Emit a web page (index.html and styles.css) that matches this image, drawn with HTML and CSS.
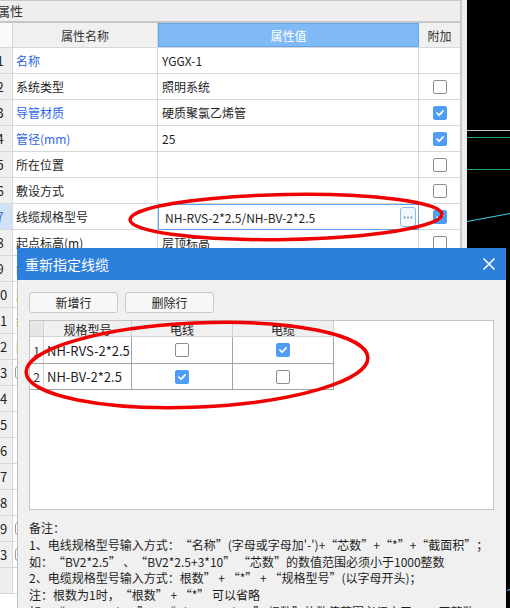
FILE: index.html
```html
<!DOCTYPE html>
<html lang="zh">
<head>
<meta charset="utf-8">
<title>属性</title>
<link rel="stylesheet" href="styles.css">
</head>
<body>
<div class="app">
  <div class="props">
    <div class="props-main">
      <div class="props-title">属性</div>
      <div class="phead">
        <div class="pnum"></div>
        <div class="pname hcell">属性名称</div>
        <div class="pval hval">属性值</div>
        <div class="patt hcell">附加</div>
      </div>
      <div class="prow"><div class="pnum">1</div><div class="pname blue">名称</div><div class="pval">YGGX-1</div><div class="patt"></div></div>
      <div class="prow"><div class="pnum">2</div><div class="pname">系统类型</div><div class="pval">照明系统</div><div class="patt"><span class="cb"></span></div></div>
      <div class="prow"><div class="pnum">3</div><div class="pname blue">导管材质</div><div class="pval">硬质聚氯乙烯管</div><div class="patt"><span class="cb on"><svg viewBox="0 0 14 14"><path d="M3.5 7.2 L6 9.6 L10.6 4.6"/></svg></span></div></div>
      <div class="prow"><div class="pnum">4</div><div class="pname blue">管径(mm)</div><div class="pval">25</div><div class="patt"><span class="cb on"><svg viewBox="0 0 14 14"><path d="M3.5 7.2 L6 9.6 L10.6 4.6"/></svg></span></div></div>
      <div class="prow"><div class="pnum">5</div><div class="pname">所在位置</div><div class="pval"></div><div class="patt"><span class="cb"></span></div></div>
      <div class="prow"><div class="pnum">6</div><div class="pname">敷设方式</div><div class="pval"></div><div class="patt"><span class="cb"></span></div></div>
      <div class="prow"><div class="pnum sel">7</div><div class="pname">线缆规格型号</div><div class="pval edit"><span class="edit-text">NH-RVS-2*2.5/NH-BV-2*2.5</span><span class="dots"><svg width="14" height="18" viewBox="0 0 14 18"><circle cx="3.5" cy="9.5" r="1"/><circle cx="7" cy="9.5" r="1"/><circle cx="10.5" cy="9.5" r="1"/></svg></span></div><div class="patt"><span class="cb on"><svg viewBox="0 0 14 14"><path d="M3.5 7.2 L6 9.6 L10.6 4.6"/></svg></span></div></div>
      <div class="prow"><div class="pnum">8</div><div class="pname">起点标高(m)</div><div class="pval">层顶标高</div><div class="patt"><span class="cb"></span></div></div>
      <div class="prow"><div class="pnum">9</div><div class="pname orange">终点标高(m)</div><div class="pval">层顶标高</div><div class="patt"></div></div>
      <div class="prow"><div class="pnum">10</div><div class="pname orange">起点</div><div class="pval"></div><div class="patt"></div></div>
      <div class="prow"><div class="pnum">11</div><div class="pname orange">终点</div><div class="pval"></div><div class="patt"></div></div>
      <div class="prow"><div class="pnum">12</div><div class="pname orange">回路</div><div class="pval"></div><div class="patt"></div></div>
      <div class="prow"><div class="pnum">13</div><div class="pname"><span class="tog"></span></div><div class="pval"></div><div class="patt"></div></div>
      <div class="prow"><div class="pnum">14</div><div class="pname"></div><div class="pval"></div><div class="patt"></div></div>
      <div class="prow"><div class="pnum">15</div><div class="pname"></div><div class="pval"></div><div class="patt"></div></div>
      <div class="prow"><div class="pnum">16</div><div class="pname"></div><div class="pval"></div><div class="patt"></div></div>
      <div class="prow"><div class="pnum">17</div><div class="pname"></div><div class="pval"></div><div class="patt"></div></div>
      <div class="prow"><div class="pnum">18</div><div class="pname"></div><div class="pval"></div><div class="patt"></div></div>
      <div class="prow"><div class="pnum">19</div><div class="pname"><span class="tog"></span></div><div class="pval"></div><div class="patt"></div></div>
      <div class="prow"><div class="pnum">23</div><div class="pname"><span class="tog"></span></div><div class="pval"></div><div class="patt"></div></div>
      <div class="prow"><div class="pnum"></div><div class="pname"></div><div class="pval"></div><div class="patt"></div></div>
    </div>
    <div class="vstrip"></div>
  </div>
  <div class="canvas">
    <svg width="43" height="608" viewBox="0 0 43 608">
      <line x1="0" y1="130.5" x2="43" y2="130.5" stroke="#bfbfbf" stroke-width="1"/>
      <line x1="0" y1="137.5" x2="43" y2="137.5" stroke="#1d9a80" stroke-width="1"/>
      <line x1="0" y1="169.5" x2="43" y2="169.5" stroke="#1d9a80" stroke-width="1"/>
      <line x1="0" y1="221.5" x2="43" y2="213.5" stroke="#3ad6ea" stroke-width="1"/>
      <line x1="40" y1="590.5" x2="43" y2="589.5" stroke="#3ad6ea" stroke-width="1"/>
    </svg>
  </div>
</div>

<div class="dialog">
  <div class="dlg-title">
    <span>重新指定线缆</span>
    <svg class="close" width="14" height="14" viewBox="0 0 14 14"><path d="M1.5 1.5 L12.5 12.5 M12.5 1.5 L1.5 12.5"/></svg>
  </div>
  <div class="dlg-body">
    <div class="btns">
      <button class="btn">新增行</button>
      <button class="btn">删除行</button>
    </div>
    <div class="cgrid">
      <div class="chead">
        <div class="cn corner"></div>
        <div class="c1">规格型号</div>
        <div class="c2">电线</div>
        <div class="c3">电缆</div>
      </div>
      <div class="crow r1">
        <div class="cn">1</div>
        <div class="c1 txt">NH-RVS-2*2.5</div>
        <div class="c2"><span class="cb"></span></div>
        <div class="c3"><span class="cb on"><svg viewBox="0 0 14 14"><path d="M3.5 7.2 L6 9.6 L10.6 4.6"/></svg></span></div>
      </div>
      <div class="crow">
        <div class="cn">2</div>
        <div class="c1 txt">NH-BV-2*2.5</div>
        <div class="c2"><span class="cb on"><svg viewBox="0 0 14 14"><path d="M3.5 7.2 L6 9.6 L10.6 4.6"/></svg></span></div>
        <div class="c3"><span class="cb"></span></div>
      </div>
    </div>
    <div class="notes">
      <div>备注：</div>
      <div>1、电线规格型号输入方式：<span class="ql">“</span>名称<span class="qr">”</span>(字母或字母加'-')+<span class="ql">“</span>芯数<span class="qr">”</span>+<span class="ql">“</span>*<span class="qr">”</span>+<span class="ql">“</span>截面积<span class="qr">”</span>；</div>
      <div>如：<span class="ql">“</span>BV2*2.5<span class="qr">”</span> 、<span class="ql">“</span>BV2*2.5+3*10<span class="qr">”</span> <span class="ql">“</span>芯数<span class="qr">”</span>的数值范围必须小于1000整数</div>
      <div>2、电缆规格型号输入方式：根数<span class="qr">”</span> + <span class="ql">“</span>*<span class="qr">”</span> + <span class="ql">“</span>规格型号<span class="qr">”</span>(以字母开头)；</div>
      <div>注：根数为1时，<span class="ql">“</span>根数<span class="qr">”</span> + <span class="ql">“</span>*<span class="qr">”</span> 可以省略</div>
      <div>如：<span class="ql">“</span>NHRVS-2*2.5<span class="qr">”</span> 、<span class="ql">“</span>3*NHBV-2*2.5<span class="qr">”</span> 根数<span class="qr">”</span>的数值范围必须小于1000正整数</div>
    </div>
  </div>
</div>

<svg class="marks" width="510" height="608" viewBox="0 0 510 608">
  <ellipse cx="286" cy="217" rx="156" ry="22.5" transform="rotate(-1 286 217)"/>
  <ellipse cx="197" cy="365" rx="171" ry="42" transform="rotate(-2.5 197 365)"/>
</svg>
</body>
</html>
```

FILE: styles.css
```css
* { box-sizing: border-box; }
html, body { margin: 0; padding: 0; }
body {
  width: 510px;
  height: 608px;
  overflow: hidden;
  position: relative;
  background: #000;
  font-family: "Noto Sans CJK SC", "Microsoft YaHei", sans-serif;
  font-size: 12px;
  color: #1e1e1e;
}

.app { display: flex; height: 608px; }

.props { width: 467px; display: flex; background: #fff; }
.props-main { width: 460px; display: flex; flex-direction: column; overflow: hidden; }
.vstrip { width: 7px; border-left: 2px solid #cacaca; background: #ededed; }

.props-title {
  height: 23px;
  flex: none;
  background: #eeeeee;
  border-top: 1px solid #c9c9c9;
  border-bottom: 2px solid #c6c6c6;
  line-height: 20px;
  font-size: 13px;
  color: #333;
  text-indent: -3px;
}

.phead, .prow { display: flex; flex: none; }
.phead { height: 25px; border-bottom: 1px solid #d8d8d8; }
.prow { height: 26px; border-bottom: 1px solid #d8d8d8; }

.pnum {
  width: 25px;
  margin-left: -12px;
  flex: none;
  display: flex;
  justify-content: center;
  align-items: center;
  background: #efefef;
  border-right: 1px solid #d8d8d8;
  font-size: 13px;
  color: #222;
  white-space: nowrap;
}
.phead .pnum { background: #fafafa; }
.pnum.sel { background: #cfe2f8; color: #3b78c8; }

.pname {
  width: 145px;
  flex: none;
  display: flex;
  align-items: center;
  padding-left: 3px;
  border-right: 1px solid #d8d8d8;
  white-space: nowrap;
  overflow: hidden;
}
.pval {
  width: 261px;
  flex: none;
  display: flex;
  align-items: center;
  padding-left: 4px;
  border-right: 1px solid #d8d8d8;
  white-space: nowrap;
  overflow: hidden;
}
.patt {
  width: 41px;
  flex: none;
  display: flex;
  align-items: center;
  justify-content: center;
}
.hcell { justify-content: center; padding-left: 0; background: #f0f0f0; color: #333; }
.hval {
  justify-content: center;
  padding-left: 0;
  background: #7fb9f6;
  border: 1px solid #5fa5ef;
  color: #fff;
}
.blue { color: #2d66e8; }
.orange { color: #e08a1e; }

.pval.edit {
  border: 1px solid #5ea3ee;
  background: #fff;
  padding-left: 6px;
  padding-right: 2px;
  justify-content: space-between;
  margin-bottom: -1px;
}
.dots {
  width: 16px;
  height: 20px;
  border: 1px solid #8fbbe8;
  border-radius: 3px;
  background: #f3f8fd;
  display: flex;
  align-items: center;
  justify-content: center;
}
.dots svg { display: block; fill: #6a8cb8; }

.tog {
  display: inline-block;
  width: 10px;
  height: 13px;
  margin-left: -1px;
  border: 1px solid #9a9a9a;
  border-radius: 3px;
}

.cb {
  display: inline-block;
  width: 14px;
  height: 14px;
  border: 1px solid #8c8c8c;
  border-radius: 2px;
  background: #fff;
}
.cb.on { background: #4f9df6; border-color: #4f9df6; }
.cb svg { display: block; width: 12px; height: 12px; }
.cb svg path { fill: none; stroke: #fff; stroke-width: 2; stroke-linecap: round; stroke-linejoin: round; }

.canvas { flex: 1; background: #000; }
.canvas svg { display: block; }

/* dialog */
.dialog {
  position: absolute;
  left: 17px;
  top: 248px;
  width: 489px;
  height: 370px;
  display: flex;
  flex-direction: column;
}
.dlg-title {
  height: 32px;
  flex: none;
  background: #2d7fdc;
  color: #fff;
  font-size: 14px;
  display: flex;
  align-items: center;
  justify-content: space-between;
  padding: 0 10px 0 8px;
}
.close path { stroke: #fff; stroke-width: 1.6; fill: none; }
.dlg-body {
  flex: 1;
  background: #f0f0f0;
  border-left: 1px solid #bdbdbd;
  padding: 12px 0 0 11px;
}
.btns { display: flex; gap: 7px; }
.btn {
  width: 89px;
  height: 21px;
  padding: 0;
  border: 1px solid #c9c9c9;
  border-radius: 3px;
  background: #f7f7f7;
  font-family: inherit;
  font-size: 12px;
  color: #222;
  line-height: 19px;
}

.cgrid {
  margin-top: 7px;
  width: 465px;
  height: 190px;
  border: 1px solid #c4c4c4;
  background: #fff;
}
.chead, .crow { display: flex; }
.chead { height: 16px; }
.crow { height: 27px; }
.crow + .crow { height: 26px; }
.chead > div, .crow > div {
  display: flex;
  align-items: center;
  justify-content: center;
  flex: none;
}
.cn { width: 14px; }
.c1 { width: 88px; }
.c2 { width: 101px; }
.c3 { width: 101px; }
.chead > div {
  background: #f0f0f0;
  border-right: 1px solid #d2d2d2;
  border-bottom: 1px solid #d2d2d2;
  color: #222;
  line-height: 15px;
  padding-top: 1px;
}
.chead .corner { background: #e6e6e6; }
.crow > div {
  border-right: 1px solid #a4a4a4;
  border-bottom: 1px solid #a4a4a4;
  font-size: 13px;
}
.crow .cn { border-right-color: #d2d2d2; font-size: 12px; color: #333; background: #fbfbfb; }
.crow .txt { justify-content: flex-start; padding-left: 3px; white-space: nowrap; }

.notes {
  margin-top: 10px;
  line-height: 16.8px;
  white-space: nowrap;
  color: #1e1e1e;
}
.ql, .qr { display: inline-block; width: 12px; }
.ql { text-align: right; }
.qr { text-align: left; }

.marks {
  position: absolute;
  left: 0;
  top: 0;
  pointer-events: none;
}
.marks ellipse { fill: none; stroke: #f00000; stroke-width: 3.5; }
```
